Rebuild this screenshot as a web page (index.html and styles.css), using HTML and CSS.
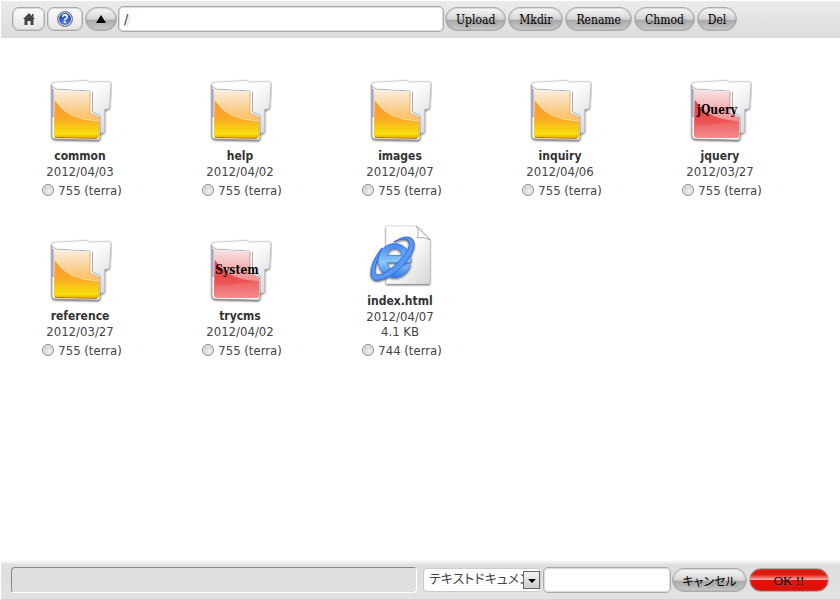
FILE: index.html
```html
<!DOCTYPE html>
<html lang="ja">
<head>
    <meta charset="UTF-8">
    <meta name="viewport" content="width=device-width, initial-scale=1.0">
    <title>File Manager</title>
    <link rel="stylesheet" href="styles.css">
</head>
<body>
    <!-- shared icon shapes -->
    <svg class="defs" width="0" height="0" aria-hidden="true">
        <defs>
            <linearGradient id="paper" x1="0" y1="0" x2="1" y2="1">
                <stop offset="0" stop-color="#fff"/>
                <stop offset="0.5" stop-color="#fafafa"/>
                <stop offset="1" stop-color="#d4d4d6"/>
            </linearGradient>
            <linearGradient id="yellow" x1="0" y1="0" x2="0" y2="1">
                <stop offset="0" stop-color="#fbeedd"/>
                <stop offset="0.5" stop-color="#fbc67a"/>
                <stop offset="1" stop-color="#fbb419"/>
            </linearGradient>
            <linearGradient id="yellowDeep" x1="0" y1="0" x2="0" y2="1">
                <stop offset="0" stop-color="#f39a3a"/>
                <stop offset="0.5" stop-color="#fbaa24"/>
                <stop offset="0.9" stop-color="#f6e20b"/>
                <stop offset="1" stop-color="#e8a800"/>
            </linearGradient>
            <linearGradient id="red" x1="0" y1="0" x2="0" y2="1">
                <stop offset="0" stop-color="#f8e2e3"/>
                <stop offset="0.5" stop-color="#f1a0a1"/>
                <stop offset="1" stop-color="#ee6a6a"/>
            </linearGradient>
            <linearGradient id="redDeep" x1="0" y1="0" x2="0" y2="1">
                <stop offset="0" stop-color="#df3f44"/>
                <stop offset="0.6" stop-color="#ee5453"/>
                <stop offset="1" stop-color="#f28080"/>
            </linearGradient>
            <linearGradient id="ie" x1="0" y1="0" x2="0" y2="1">
                <stop offset="0" stop-color="#3f86ee"/>
                <stop offset="0.55" stop-color="#8ec8f8"/>
                <stop offset="1" stop-color="#2f78e8"/>
            </linearGradient>
            <filter id="shade" x="-20%" y="-20%" width="140%" height="140%">
                <feDropShadow dx="0" dy="1" stdDeviation="1.2" flood-color="#000" flood-opacity="0.7"/>
            </filter>
        </defs>
        <symbol id="folder-back" viewBox="0 0 64 64">
            <g filter="url(#shade)">
                <path d="M3 5 Q3 3.500 5 3.300 L38 1.500 L40.500 3 L60 2.500 Q62 2.700 61.800 5 L60.500 28 Q60.300 30 58 30 L55.500 30.500 V52 Q55.500 54 53 54 H10 Z" fill="url(#paper)" stroke="#b5b5b8" stroke-width="0.5"/>
                <path d="M3 6 L6 10 L42 12 Q43.500 12.200 43.500 14 V33 L51 37 V59 Q51 61 49 61 L6 60 Q3 59.500 3 57 Z" fill="#fff" stroke="#77777b" stroke-width="0.6"/>
            </g>
            <path d="M4 10 V38" stroke="#5a5aa8" stroke-width="0.8"/>
            <path d="M3 6 L8 9 L42 11 V33" fill="none" stroke="#fff" stroke-width="1"/>
        </symbol>
        <symbol id="folder" viewBox="-1 0 64 64">
            <use href="#folder-back" width="64" height="64"/>
            <path d="M6 11 L41 13 V34 L50 38.500 V57 Q50 59 48 59 L7 58.500 Q5 58 5 56 V12 Z" fill="url(#yellow)"/>
            <path d="M6 21 Q18 41 50 42 V57 Q50 59 48 59 L7 58.500 Q5 58 5 56 Z" fill="url(#yellowDeep)"/>
            <path d="M6 21 Q18 41 50 42" fill="none" stroke="#fde6b6" stroke-width="0.7"/>
            <path d="M6 58.500 L48 59.500" stroke="#a87408" stroke-width="0.9"/>
            <path d="M41 13 V34 L50 38.500 V57" fill="none" stroke="#d9a64c" stroke-width="0.8"/>
        </symbol>
        <symbol id="folder-red" viewBox="-1 0 64 64">
            <use href="#folder-back" width="64" height="64"/>
            <path d="M6 11 L41 13 V34 L50 38.500 V57 Q50 59 48 59 L7 58.500 Q5 58 5 56 V12 Z" fill="url(#red)"/>
            <path d="M6 21 Q18 41 50 42 V57 Q50 59 48 59 L7 58.500 Q5 58 5 56 Z" fill="url(#redDeep)"/>
            <path d="M6 46 Q32 46 50 41 V57 Q50 59 48 59 L7 58.500 Q5 58 5 56 Z" fill="#fff" opacity="0.1"/>
            <path d="M41 13 V34 L50 38.500 V57" fill="none" stroke="#c98083" stroke-width="0.8"/>
        </symbol>
        <symbol id="html-file" viewBox="-1 0 64 64">
            <g filter="url(#shade)">
                <path d="M17 2 H48 L61 15 V60 H17 Z" fill="#f0f0f2"/>
            </g>
            <path d="M17 2 H48 L61 15 V60 H17 Z" fill="url(#paper)" stroke="#c8c8cc" stroke-width="0.5"/>
            <path d="M47 2 Q51 7 48 14 Q55 12 61 16 Z" fill="#fff" stroke="#9a9a9e" stroke-width="0.8"/>
            <g filter="url(#shade)">
                <path d="M41.500 41 A16.500 17 0 1 1 42 35 V38.500 H18.500 Q19 46 27 46 Q31 46 33 41 Z M18.500 31.500 H33 Q32 24.500 26 24.500 Q19.500 24.500 18.500 31.500 Z" fill="url(#ie)" stroke="#3b7ce4" stroke-width="0.7" fill-rule="evenodd"/>
                <path d="M13 24 Q1 39 2 51 Q3 59 14 55 Q27 51 38 37 Q48 23 44 16 Q39 9 25 18 Q38 12 40 18 Q42 24 33 34 Q23 46 13 50 Q5 53 6 46 Q7 37 13 24 Z" fill="#5a98f4" stroke="#2b66d8" stroke-width="0.9"/>
            </g>
        </symbol>
    </svg>

    <form class="toolbar">
        <button type="button" class="btn icon-btn" aria-label="Home">
            <svg width="12" height="12" viewBox="0 0 12 12" aria-hidden="true">
                <path d="M6 0 L12 6 H10.500 V12 H7.500 V8 H4.500 V12 H1.500 V6 H0 Z" fill="#444"/>
                <path d="M9 1 H10.500 V4.500 L9 3 Z" fill="#444"/>
            </svg>
        </button>
        <button type="button" class="btn icon-btn help-btn" aria-label="Help">
            <span class="help-mark">?</span>
        </button>
        <button type="button" class="btn up-btn" aria-label="Up">
            <svg width="10" height="8" viewBox="0 0 10 8" aria-hidden="true"><path d="M5 0 L10 8 H0 Z" fill="#000"/></svg>
        </button>
        <input type="text" class="field path" value="/" aria-label="Path">
        <button type="button" class="btn">Upload</button>
        <button type="button" class="btn">Mkdir</button>
        <button type="button" class="btn">Rename</button>
        <button type="button" class="btn">Chmod</button>
        <button type="button" class="btn">Del</button>
    </form>

    <main class="files">
        <div class="file">
            <svg class="icon" aria-hidden="true"><use href="#folder"/></svg>
            <a class="name" href="#common">common</a>
            <span>2012/04/03</span>
            <label><input type="radio" name="file">755 (terra)</label>
        </div>
        <div class="file">
            <svg class="icon" aria-hidden="true"><use href="#folder"/></svg>
            <a class="name" href="#help">help</a>
            <span>2012/04/02</span>
            <label><input type="radio" name="file">755 (terra)</label>
        </div>
        <div class="file">
            <svg class="icon" aria-hidden="true"><use href="#folder"/></svg>
            <a class="name" href="#images">images</a>
            <span>2012/04/07</span>
            <label><input type="radio" name="file">755 (terra)</label>
        </div>
        <div class="file">
            <svg class="icon" aria-hidden="true"><use href="#folder"/></svg>
            <a class="name" href="#inquiry">inquiry</a>
            <span>2012/04/06</span>
            <label><input type="radio" name="file">755 (terra)</label>
        </div>
        <div class="file">
            <svg class="icon" aria-hidden="true"><use href="#folder-red"/></svg>
            <b class="tag">jQuery</b>
            <a class="name" href="#jquery">jquery</a>
            <span>2012/03/27</span>
            <label><input type="radio" name="file">755 (terra)</label>
        </div>
        <div class="file">
            <svg class="icon" aria-hidden="true"><use href="#folder"/></svg>
            <a class="name" href="#reference">reference</a>
            <span>2012/03/27</span>
            <label><input type="radio" name="file">755 (terra)</label>
        </div>
        <div class="file">
            <svg class="icon" aria-hidden="true"><use href="#folder-red"/></svg>
            <b class="tag">System</b>
            <a class="name" href="#trycms">trycms</a>
            <span>2012/04/02</span>
            <label><input type="radio" name="file">755 (terra)</label>
        </div>
        <div class="file">
            <svg class="icon" aria-hidden="true"><use href="#html-file"/></svg>
            <a class="name" href="#index">index.html</a>
            <span>2012/04/07</span>
            <span>4.1 KB</span>
            <label><input type="radio" name="file">744 (terra)</label>
        </div>
    </main>

    <form class="bottombar">
        <div class="status"></div>
        <div class="type">
            <select aria-label="ファイルの種類">
                <option>テキストドキュメント</option>
            </select>
            <span class="arrow"></span>
        </div>
        <input type="text" class="field filename" aria-label="ファイル名">
        <button type="button" class="btn cancel">キャンセル</button>
        <button type="button" class="btn ok">OK !!</button>
    </form>
</body>
</html>
```
FILE: styles.css
```css
* {
    margin: 0;
    padding: 0;
    box-sizing: border-box;
}

body {
    display: flex;
    flex-direction: column;
    min-height: 100vh;
    padding-top: 1px;
    background: #fff;
    color: #444;
    font: 13px/15px "DejaVu Sans Condensed", "Noto Sans CJK JP", sans-serif;
}

.defs {
    position: absolute;
}

/* bars */
.toolbar {
    display: flex;
    align-items: center;
    gap: 2px;
    height: 37px;
    margin-left: 1px;
    padding: 0 11px 1px;
    background: linear-gradient(#ebebeb, #dcdcdc);
}

.bottombar {
    display: flex;
    align-items: center;
    gap: 2px;
    height: 40px;
    margin-left: 1px;
    padding: 0 11px 0 10px;
    background: linear-gradient(#fff, #dedede 5px, #e2e2e2);
    border-bottom: 1px solid #d2d2d2;
}

/* buttons */
.btn {
    height: 24px;
    padding: 2px 10px 0;
    border: 1px solid #aaa;
    border-radius: 12px;
    background: linear-gradient(#f8f8f8, #d4d4d4 52%, #a8a8a8 53%, #cacaca);
    box-shadow: inset 0 0 0 1px rgba(150, 150, 150, 0.3);
    color: #000;
    font: 12px/16px "DejaVu Serif Condensed", "DejaVu Serif", serif;
    text-shadow: 2px 2px 3px #999;
    white-space: nowrap;
}

.icon-btn {
    display: flex;
    align-items: center;
    justify-content: center;
    width: 33px;
    padding: 0;
    border-radius: 7px;
    background: linear-gradient(#fafafa, #e6e6e6);
}

.help-btn {
    width: 36px;
}

.help-mark {
    width: 16px;
    height: 16px;
    border: 1px solid #777;
    border-radius: 50%;
    background: radial-gradient(circle at 50% 80%, #5b8ae8, #1d3fae 70%);
    box-shadow: inset 0 0 0 1px #dfe6f5;
    color: #fff;
    font: bold 12px/14px "Liberation Sans", sans-serif;
    text-shadow: none;
}

.up-btn {
    width: 32px;
    padding: 0;
}

.field {
    height: 26px;
    padding: 0 5px;
    border: 1px solid #aaa;
    border-radius: 5px;
    background: #fff;
    box-shadow: inset 0 0 0 1px #ddd;
    color: #333;
    font: 14px/20px "DejaVu Sans Condensed", "Noto Sans", sans-serif;
    text-shadow: 2px 2px 2px #ccc;
}

.path {
    flex: 0 1 326px;
    min-width: 0;
    margin: 0 -1px;
}

/* file list */
.files {
    display: flex;
    flex: 1;
    flex-wrap: wrap;
    align-content: flex-start;
    align-items: flex-end;
    padding-top: 2px;
}

.file {
    display: flex;
    position: relative;
    flex-direction: column;
    align-items: center;
    justify-content: flex-end;
    width: 160px;
    height: 160px;
    text-align: center;
}

.icon {
    width: 64px;
    height: 64px;
    margin-bottom: 6px;
}

.tag {
    position: absolute;
    top: 63px;
    left: 0;
    width: 154px;
    color: #000;
    font: bold 12px/15px "DejaVu Serif Condensed", "DejaVu Serif", serif;
}

.name {
    color: #333;
    font-size: 12px;
    font-weight: bold;
    text-decoration: none;
}

.file label {
    display: flex;
    align-items: center;
    gap: 4px;
    height: 20px;
    margin-top: 1px;
    padding-left: 4px;
}

.file input {
    width: 12px;
    height: 12px;
    border: 1px solid #8b8b8b;
    border-radius: 50%;
    background: radial-gradient(circle at 60% 60%, #f0f0f0, #bbb);
    box-shadow: inset 0 0 0 1px #f2f2f2;
    appearance: none;
}

/* bottom controls */
.status {
    flex: 1;
    height: 26px;
    margin-right: 4px;
    border: 1px solid #888;
    border-right-color: #fff;
    border-bottom-color: #fff;
    border-radius: 4px;
    background: #dfdfdf;
}

.type {
    position: relative;
}

.type select {
    display: block;
    width: 118px;
    height: 24px;
    padding: 0 17px 3px 5px;
    border: 1px solid #ccc;
    border-radius: 4px;
    background: #fff;
    color: #444;
    font: 13px/18px "Noto Sans CJK JP", sans-serif;
    font-feature-settings: "palt";
    appearance: none;
}

.arrow {
    position: absolute;
    top: 3px;
    right: 1px;
    width: 17px;
    height: 18px;
    border: 1px solid #666;
    background: linear-gradient(#f4f4f4, #ccc);
    pointer-events: none;
}

.arrow::after {
    content: "";
    position: absolute;
    top: 7px;
    left: 4px;
    border: 4px solid transparent;
    border-top-color: #000;
    border-bottom: 0;
}

.filename {
    width: 128px;
    margin-right: -1px;
}

.cancel {
    width: 75px;
    padding: 2px 0 0;
    font: 12px/16px "Noto Sans CJK JP", sans-serif;
    font-feature-settings: "palt";
}

.ok {
    width: 80px;
    background: linear-gradient(#d81a08, #e01a0c 25%, #f7b0b0 49%, #e81008 51%, #dd0f05);
    font: 13px/16px "Liberation Serif", serif;
    text-shadow: 2px 2px 3px #a44;
}
```
